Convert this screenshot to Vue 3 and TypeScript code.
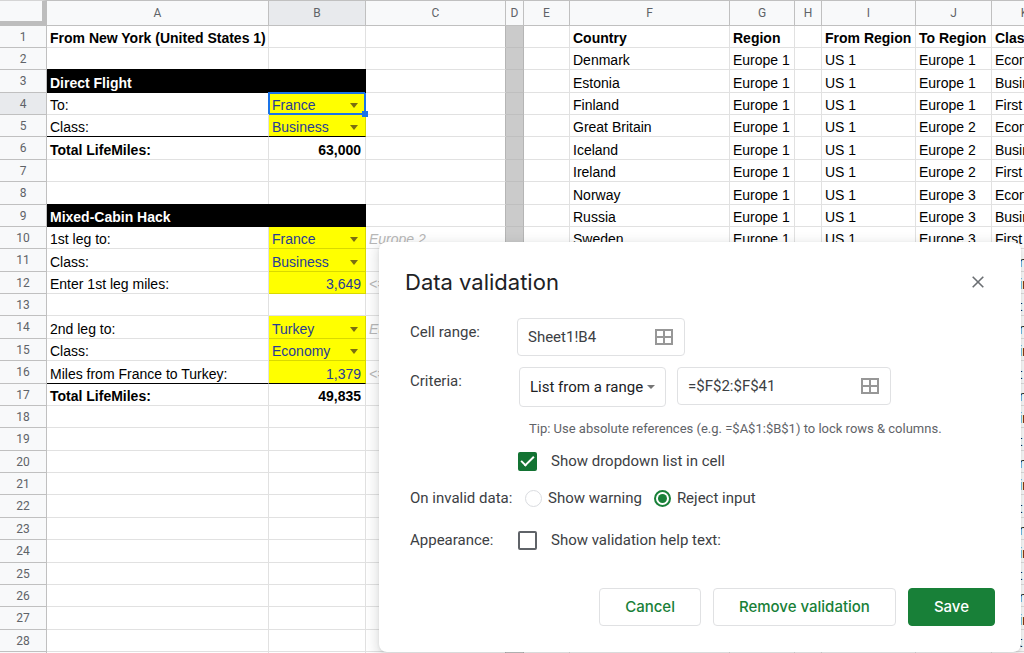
<script setup lang="ts">
import { ref } from 'vue'

type CellKind = 'text' | 'bold' | 'band' | 'note' | 'number' | 'total' | 'select'

interface Cell {
  kind: CellKind
  text: string
  label?: string
}

const columns = ['A', 'B', 'C', 'D', 'E', 'F', 'G', 'H', 'I', 'J', 'K']
const rowCount = 29
const countries = ['Denmark', 'Estonia', 'Finland', 'Great Britain', 'Iceland', 'Ireland', 'Norway', 'Russia', 'Sweden']
const cabins = ['Economy', 'Business', 'First']
const destinations = ['France', 'Turkey']

const cells = ref<Record<string, Cell>>({
  A1: { kind: 'bold', text: 'From New York (United States 1)' },
  A3: { kind: 'band', text: 'Direct Flight' },
  B3: { kind: 'band', text: '' },
  A4: { kind: 'text', text: 'To:' },
  B4: { kind: 'select', text: 'France', label: 'To' },
  A5: { kind: 'text', text: 'Class:' },
  B5: { kind: 'select', text: 'Business', label: 'Class' },
  A6: { kind: 'bold', text: 'Total LifeMiles:' },
  B6: { kind: 'total', text: '63,000' },
  A9: { kind: 'band', text: 'Mixed-Cabin Hack' },
  B9: { kind: 'band', text: '' },
  A10: { kind: 'text', text: '1st leg to:' },
  B10: { kind: 'select', text: 'France', label: '1st leg to' },
  C10: { kind: 'note', text: 'Europe 2' },
  A11: { kind: 'text', text: 'Class:' },
  B11: { kind: 'select', text: 'Business', label: '1st leg class' },
  A12: { kind: 'text', text: 'Enter 1st leg miles:' },
  B12: { kind: 'number', text: '3,649' },
  C12: { kind: 'note', text: '<=' },
  A14: { kind: 'text', text: '2nd leg to:' },
  B14: { kind: 'select', text: 'Turkey', label: '2nd leg to' },
  C14: { kind: 'note', text: 'Europe 3' },
  A15: { kind: 'text', text: 'Class:' },
  B15: { kind: 'select', text: 'Economy', label: '2nd leg class' },
  A16: { kind: 'text', text: 'Miles from France to Turkey:' },
  B16: { kind: 'number', text: '1,379' },
  C16: { kind: 'note', text: '<=' },
  A17: { kind: 'bold', text: 'Total LifeMiles:' },
  B17: { kind: 'total', text: '49,835' },
  F1: { kind: 'bold', text: 'Country' },
  G1: { kind: 'bold', text: 'Region' },
  I1: { kind: 'bold', text: 'From Region' },
  J1: { kind: 'bold', text: 'To Region' },
  K1: { kind: 'bold', text: 'Class' },
})

countries.forEach((name, i) => {
  const row = i + 2
  cells.value[`F${row}`] = { kind: 'text', text: name }
  cells.value[`G${row}`] = { kind: 'text', text: 'Europe 1' }
  cells.value[`I${row}`] = { kind: 'text', text: 'US 1' }
  cells.value[`J${row}`] = { kind: 'text', text: `Europe ${Math.floor(i / 3) + 1}` }
})
for (let row = 2; row <= rowCount; row++) {
  cells.value[`K${row}`] = { kind: 'text', text: cabins[(row - 2) % 3] }
}

function cellClass(col: string, row: number): string[] {
  const cell = cells.value[`${col}${row}`]
  const names = [`col-${col.toLowerCase()}`]
  if (cell) names.push(cell.kind)
  if (col === 'B' && row === 4) names.push('selected')
  if ((col === 'A' || col === 'B') && (row === 5 || row === 16)) names.push('ruled')
  return names
}

function optionsFor(cell: Cell): string[] {
  return cabins.includes(cell.text) ? cabins : destinations
}

const cellRange = ref('Sheet1!B4')
const criteria = ref('List from a range')
const criteriaRange = ref('=$F$2:$F$41')
const showDropdown = ref(true)
const onInvalid = ref('reject')
const showHelp = ref(false)
</script>

<template>
  <main class="workspace">
    <table class="sheet">
      <colgroup>
        <col class="w-row" />
        <col v-for="c in columns" :key="c" :class="`w-${c.toLowerCase()}`" />
        <col />
      </colgroup>
      <thead>
        <tr>
          <th class="corner"></th>
          <th v-for="c in columns" :key="c" scope="col" :class="{ active: c === 'B' }">{{ c }}</th>
          <th></th>
        </tr>
      </thead>
      <tbody>
        <tr v-for="r in rowCount" :key="r">
          <th scope="row" :class="{ active: r === 4 }">{{ r }}</th>
          <td v-for="c in columns" :key="c" :class="cellClass(c, r)">
            <template v-if="cells[c + r]">
              <span v-if="cells[c + r].kind === 'select'" class="picker">
                <select v-model="cells[c + r].text" :aria-label="cells[c + r].label">
                  <option v-for="o in optionsFor(cells[c + r])" :key="o">{{ o }}</option>
                </select>
                <svg width="8" height="5" viewBox="0 0 8 5" aria-hidden="true"><path d="M0 0h8L4 5z" /></svg>
              </span>
              <template v-else>{{ cells[c + r].text }}</template>
            </template>
          </td>
          <td></td>
        </tr>
      </tbody>
    </table>

    <section class="dialog" role="dialog" aria-labelledby="dialog-title">
      <header class="dialog-head">
        <h1 id="dialog-title">Data validation</h1>
        <button type="button" class="close" aria-label="Close">
          <svg width="12" height="12" viewBox="0 0 12 12"><path d="M0.7 0.7l10.6 10.6M11.3 0.7L0.7 11.3" /></svg>
        </button>
      </header>

      <form class="form" @submit.prevent>
        <div class="field range-field">
          <label class="name" for="cell-range">Cell range:</label>
          <div class="box range">
            <input id="cell-range" v-model="cellRange" type="text" />
            <button type="button" class="pick" aria-label="Select data range">
              <svg width="18" height="16" viewBox="0 0 18 16"><path d="M1 1h16v14H1zM9 1v14M1 8h16" /></svg>
            </button>
          </div>
        </div>

        <div class="field criteria-field">
          <label class="name" for="criteria">Criteria:</label>
          <div class="pair">
            <div class="box criteria">
              <select id="criteria" v-model="criteria">
                <option>List from a range</option>
                <option>List of items</option>
                <option>Number</option>
              </select>
              <svg width="8" height="4" viewBox="0 0 8 4" aria-hidden="true"><path d="M0 0h8L4 4z" /></svg>
            </div>
            <div class="box source">
              <input v-model="criteriaRange" type="text" aria-label="Criteria range" />
              <button type="button" class="pick" aria-label="Select criteria range">
                <svg width="18" height="16" viewBox="0 0 18 16"><path d="M1 1h16v14H1zM9 1v14M1 8h16" /></svg>
              </button>
            </div>
          </div>
          <p class="tip">Tip: Use absolute references (e.g. =$A$1:$B$1) to lock rows &amp; columns.</p>
        </div>

        <div class="field dropdown-field">
          <label class="choice only">
            <input v-model="showDropdown" type="checkbox" />
            <span>Show dropdown list in cell</span>
          </label>
        </div>

        <div class="field invalid-field" role="radiogroup" aria-labelledby="invalid-name">
          <span id="invalid-name" class="name">On invalid data:</span>
          <div class="radios">
            <label class="option">
              <input v-model="onInvalid" type="radio" name="invalid" value="warn" />
              <span>Show warning</span>
            </label>
            <label class="option">
              <input v-model="onInvalid" type="radio" name="invalid" value="reject" />
              <span>Reject input</span>
            </label>
          </div>
        </div>

        <div class="field appearance-field">
          <span class="name">Appearance:</span>
          <label class="choice">
            <input v-model="showHelp" type="checkbox" />
            <span>Show validation help text:</span>
          </label>
        </div>

        <footer class="actions">
          <button type="button" class="btn">Cancel</button>
          <button type="button" class="btn">Remove validation</button>
          <button type="submit" class="btn primary">Save</button>
        </footer>
      </form>
    </section>
  </main>
</template>

<style>
body {
  margin: 0;
  background: #fff;
}
</style>

<style scoped>
.workspace {
  position: relative;
  height: 100vh;
  overflow: hidden;
  font-family: "Liberation Sans", Arial, sans-serif;
  font-size: 14px;
  color: #000;
}

.sheet {
  table-layout: fixed;
  width: 100%;
  min-width: 1060px;
  border-collapse: separate;
  border-spacing: 0;
}
.w-row { width: 47px; }
.w-a { width: 222px; }
.w-b { width: 97px; }
.w-c { width: 140px; }
.w-d { width: 18px; }
.w-e { width: 46px; }
.w-f { width: 160px; }
.w-g { width: 65px; }
.w-h { width: 27px; }
.w-i { width: 94px; }
.w-j { width: 76px; }
.w-k { width: 66px; }

.sheet th {
  padding: 0;
  background: #f8f9fa;
  border-right: 1px solid #c0c0c0;
  border-bottom: 1px solid #c0c0c0;
  font: 12px/16px Roboto, sans-serif;
  color: #5f6368;
  text-align: center;
  vertical-align: middle;
}
.sheet thead tr { height: 26px; }
.sheet thead th { border-top: 1px solid #c0c0c0; }
.sheet th.active { background: #e8eaed; }
.sheet thead th.corner {
  border-top-color: #d5d5d5;
  border-right: 5px solid #bdbdbd;
  border-bottom: 5px solid #bdbdbd;
}

.sheet tbody tr { height: 22px; }
.sheet tbody tr:nth-child(8n + 3),
.sheet tbody tr:nth-child(8n + 6),
.sheet tbody tr:nth-child(8n + 8) { height: 23px; }

.sheet td {
  padding: 0 3px;
  border-right: 1px solid #e1e1e1;
  border-bottom: 1px solid #e1e1e1;
  line-height: 18px;
  vertical-align: bottom;
  white-space: nowrap;
}
.sheet td.col-d {
  background: #cbcbcb;
  border-right-color: #b5b5b5;
  border-bottom-color: #bfbfbf;
}
.sheet td.col-c { border-right-color: #b5b5b5; }
.sheet td.bold { font-weight: 700; }
.sheet td.band {
  background: #000;
  border-color: #000;
  box-shadow: 0 -1px #000;
  color: #fff;
  font-weight: 700;
}
.sheet td.note { color: #b7b7b7; font-style: italic; }
.sheet td.number,
.sheet td.total {
  padding-right: 4px;
  text-align: right;
}
.sheet td.total { font-weight: 700; }
.sheet td.number,
.sheet td.select {
  background: #ff0;
  border-color: #d9d900;
  color: #283c96;
}
.sheet td.ruled { border-bottom-color: #000; }
.sheet td.selected {
  position: relative;
  border-color: #1a73e8;
  box-shadow: -1px -1px #1a73e8, inset 0 0 0 1px #1a73e8;
}
.sheet td.selected::after {
  content: "";
  position: absolute;
  z-index: 1;
  right: -3px;
  bottom: -3px;
  width: 6px;
  height: 6px;
  background: #1a73e8;
}

.picker {
  display: flex;
  align-items: center;
  padding-right: 4px;
}
.picker select {
  flex: 1;
  min-width: 0;
  height: 18px;
  padding: 0;
  border: 0;
  outline: 0;
  appearance: none;
  background: transparent;
  font: inherit;
  color: inherit;
}
.picker svg { flex: none; fill: #7a6f10; }

.dialog {
  position: absolute;
  top: 242px;
  left: 379px;
  box-sizing: border-box;
  width: 642px;
  padding: 26px;
  border-radius: 8px;
  background: #fff;
  box-shadow: 0 1px 3px rgba(60, 64, 67, 0.1), 0 4px 12px 3px rgba(60, 64, 67, 0.15);
  font: 15px/20px Roboto, sans-serif;
  color: #3c4043;
}
.dialog-head {
  display: flex;
  align-items: center;
  justify-content: space-between;
  padding-right: 11px;
}
.dialog-head h1 {
  margin: 0;
  font: 400 22px/28px Inter, sans-serif;
  color: #202124;
}
.close {
  display: flex;
  padding: 0;
  border: 0;
  background: none;
}
.close svg { fill: none; stroke: #6a6e72; stroke-width: 1.6; }

.form { margin-top: 22px; }
.field {
  display: grid;
  grid-template-columns: 107px 1fr;
  align-items: start;
  padding-left: 5px;
}
.name { line-height: 20px; }
.range-field .name,
.criteria-field .name { line-height: 28px; }
.criteria-field { margin-top: 11px; }
.dropdown-field { margin-top: 12px; }
.invalid-field { margin-top: 17px; }
.appearance-field { margin-top: 22px; }

.box {
  display: flex;
  align-items: center;
  box-sizing: border-box;
  height: 38px;
  border: 1px solid #e0e1e3;
  border-radius: 4px;
  padding: 0 11px 0 10px;
}
.box input {
  flex: 1;
  min-width: 0;
  padding: 0;
  border: 0;
  outline: 0;
  background: none;
  font: inherit;
  color: inherit;
}
.pair {
  display: flex;
  gap: 11px;
  padding-left: 2px;
}
.range { width: 168px; }
.criteria {
  width: 147px;
  height: 40px;
  padding-right: 10px;
}
.criteria select {
  flex: 1;
  min-width: 0;
  padding: 0;
  border: 0;
  outline: 0;
  appearance: none;
  background: none;
  font: inherit;
  color: #202124;
}
.criteria svg { flex: none; fill: #757575; }
.source { width: 214px; }
.pick {
  display: flex;
  padding: 0;
  border: 0;
  background: none;
}
.pick svg { fill: none; stroke: #979797; stroke-width: 2; }

.tip {
  grid-column: 2;
  margin: 12px 0 0 12px;
  font-size: 13px;
  color: #5f6368;
}

.choice,
.option {
  display: flex;
  align-items: center;
}
.choice {
  gap: 14px;
  padding-left: 1px;
}
.choice.only { grid-column: 2; }
.choice input {
  box-sizing: border-box;
  width: 19px;
  height: 19px;
  margin: 0;
  border: 2px solid #5f6368;
  border-radius: 2px;
  appearance: none;
}
.choice input:checked {
  display: grid;
  place-items: center;
  border-color: #137333;
  background: #137333;
}
.choice input:checked::before {
  content: "";
  box-sizing: border-box;
  width: 13px;
  height: 7px;
  margin-bottom: 3px;
  border-left: 2px solid #fff;
  border-bottom: 2px solid #fff;
  transform: rotate(-45deg);
}
.radios { display: flex; gap: 12px; padding-left: 8px; }
.option { gap: 6px; }
.option input {
  display: grid;
  place-items: center;
  box-sizing: border-box;
  width: 17px;
  height: 17px;
  margin: 0;
  border: 1px solid #dadce0;
  border-radius: 50%;
  appearance: none;
}
.option input:checked { border: 2px solid #188038; }
.option input:checked::before {
  content: "";
  width: 9px;
  height: 9px;
  border-radius: 50%;
  background: #188038;
}

.actions {
  display: flex;
  justify-content: flex-end;
  gap: 12px;
  margin-top: 38px;
}
.btn {
  box-sizing: border-box;
  height: 38px;
  padding: 0 25px;
  border: 1px solid #e0e1e3;
  border-radius: 4px;
  background: #fff;
  font: 500 15px/20px Inter, sans-serif;
  color: #188038;
}
.btn.primary {
  border-color: #188038;
  background: #188038;
  color: #fff;
}
</style>
